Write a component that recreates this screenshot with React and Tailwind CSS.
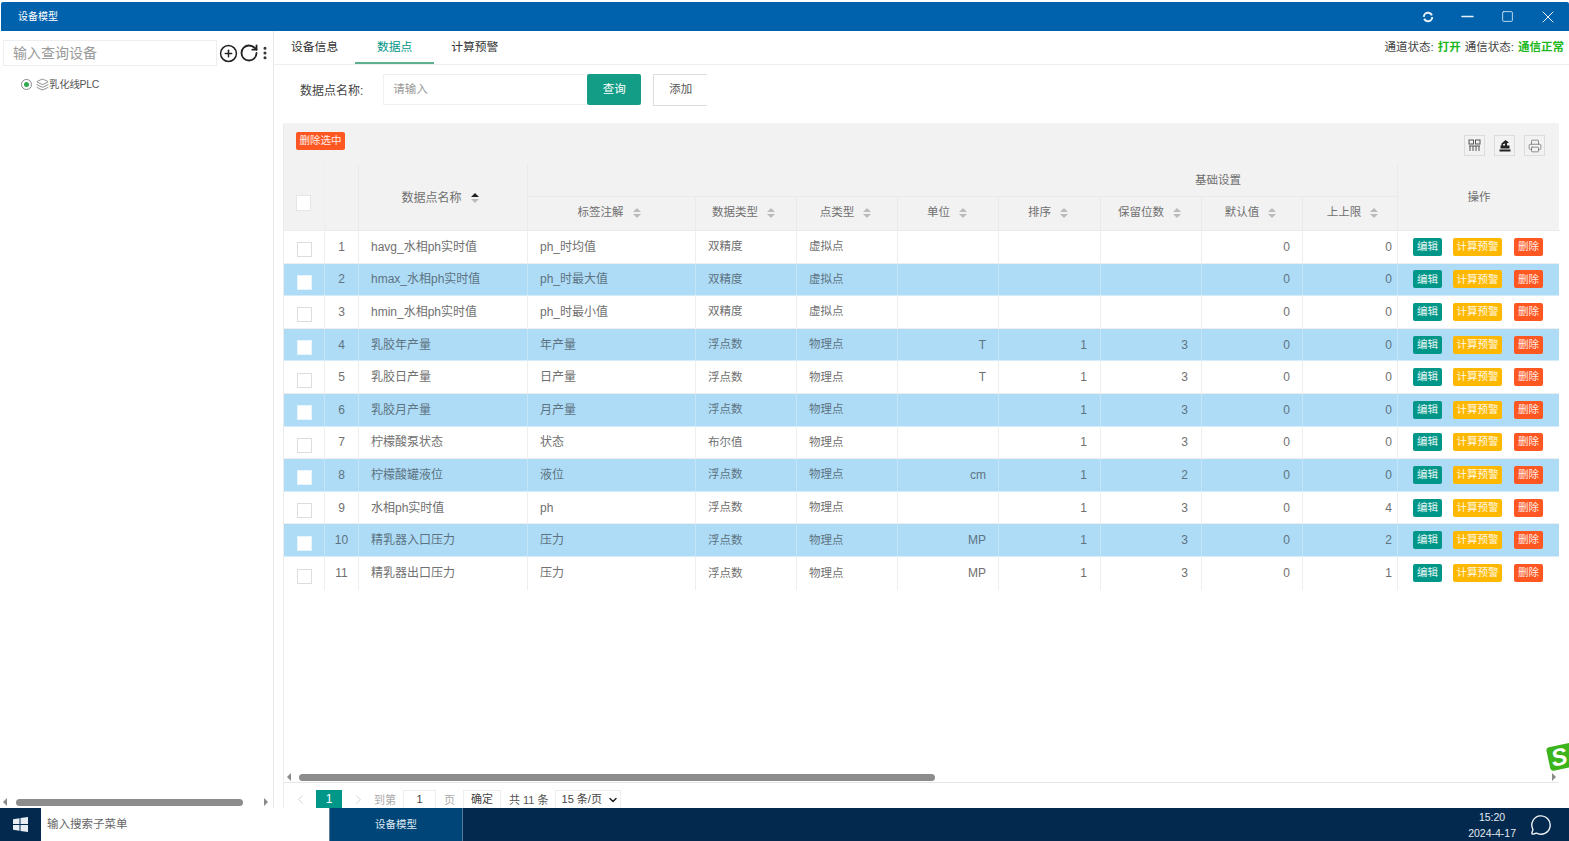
import { Minus, Square, X, CirclePlus, RotateCw, EllipsisVertical, Layers, Printer, MessageCircle, ChevronLeft, ChevronRight, ChevronDown } from "lucide-react";

const gridCols = "grid grid-cols-[41px_34px_169px_168px_101px_101px_101px_102px_101px_101px_95px_162px]";

const rows = [
  ["havg_水相ph实时值", "ph_时均值", "双精度", "虚拟点", "", "", "", "0", "0"],
  ["hmax_水相ph实时值", "ph_时最大值", "双精度", "虚拟点", "", "", "", "0", "0"],
  ["hmin_水相ph实时值", "ph_时最小值", "双精度", "虚拟点", "", "", "", "0", "0"],
  ["乳胶年产量", "年产量", "浮点数", "物理点", "T", "1", "3", "0", "0"],
  ["乳胶日产量", "日产量", "浮点数", "物理点", "T", "1", "3", "0", "0"],
  ["乳胶月产量", "月产量", "浮点数", "物理点", "", "1", "3", "0", "0"],
  ["柠檬酸泵状态", "状态", "布尔值", "物理点", "", "1", "3", "0", "0"],
  ["柠檬酸罐液位", "液位", "浮点数", "物理点", "cm", "1", "2", "0", "0"],
  ["水相ph实时值", "ph", "浮点数", "物理点", "", "1", "3", "0", "4"],
  ["精乳器入口压力", "压力", "浮点数", "物理点", "MP", "1", "3", "0", "2"],
  ["精乳器出口压力", "压力", "浮点数", "物理点", "MP", "1", "3", "0", "1"],
];

const subHeaders = [
  ["标签注解", "pr-[5px]"],
  ["数据类型", "pr-[5px]"],
  ["点类型", "pr-[3px]"],
  ["单位", "pr-[2px]"],
  ["排序", "pr-[3px]"],
  ["保留位数", "pr-[3px]"],
  ["默认值", "pr-[3px]"],
  ["上上限", "pl-[5px]"],
];

function SortIcon({ active }) {
  return (
    <span className="ml-[9px] flex flex-col gap-[2px]">
      <span className={`h-0 w-0 border-x-[4px] border-b-[4px] border-x-transparent ${active ? "border-b-[#222]" : "border-b-[#bbb]"}`} />
      <span className="h-0 w-0 border-x-[4px] border-t-[4px] border-x-transparent border-t-[#bbb]" />
    </span>
  );
}

function TinyBtn({ className, children }) {
  return (
    <span className={`flex h-[18px] items-center justify-center rounded-[2px] text-[10.5px] text-white/90 ${className}`}>
      {children}
    </span>
  );
}

function ToolBtn({ children }) {
  return (
    <span className="flex h-[21px] w-[21px] items-center justify-center border border-[#dcdcdc] text-[#555]">
      {children}
    </span>
  );
}

function Row({ row, index, last }) {
  const blue = index % 2 === 1;
  const cell = `flex items-center border-r ${blue ? "border-[#c4e4f7]" : "border-[#eeeeee]"}`;
  const edge = last ? "" : "border-b";
  return (
    <div className={`${gridCols} h-[32.6px] text-[11.5px] ${edge} ${blue ? "border-b-[#d5ecf9] bg-[#aedcf6] text-[#5d7382]" : "border-b-[#eeeeee] bg-white text-[#707070]"}`}>
      <div className={`${cell} pl-[13px] pt-[6px]`}>
        <span className={`h-[15px] w-[15px] border ${blue ? "border-[#e8f4fb] bg-white" : "border-[#dddddd] bg-white"}`} />
      </div>
      <div className={`${cell} justify-center text-[12px]`}>{index + 1}</div>
      <div className={`${cell} pl-[12px] text-[12px]`}>{row[0]}</div>
      <div className={`${cell} pl-[12px] text-[12px]`}>{row[1]}</div>
      <div className={`${cell} pl-[12px]`}>{row[2]}</div>
      <div className={`${cell} pl-[12px]`}>{row[3]}</div>
      <div className={`${cell} justify-end pr-[12px] text-[12px]`}>{row[4]}</div>
      <div className={`${cell} justify-end pr-[13px] text-[12px]`}>{row[5]}</div>
      <div className={`${cell} justify-end pr-[13px] text-[12px]`}>{row[6]}</div>
      <div className={`${cell} justify-end pr-[12px] text-[12px]`}>{row[7]}</div>
      <div className={`${cell} justify-end pr-[5px] text-[12px]`}>{row[8]}</div>
      <div className="flex items-center pl-[15px]">
        <TinyBtn className="w-[29px] bg-[#009688]">编辑</TinyBtn>
        <TinyBtn className="ml-[11px] w-[49px] bg-[#ffb800]">计算预警</TinyBtn>
        <TinyBtn className="ml-[12px] w-[29px] bg-[#ff5722]">删除</TinyBtn>
      </div>
    </div>
  );
}

function Scrollbar({ thumbClass, rightClass }) {
  return (
    <div className="flex items-center">
      <span className="ml-[3px] h-0 w-0 border-y-[4px] border-r-[4px] border-y-transparent border-r-[#8a8a8a]" />
      <span className={`h-[7px] rounded-full bg-[#8c8c8c] ${thumbClass}`} />
      <span className={`h-0 w-0 border-y-[4px] border-l-[4px] border-y-transparent border-l-[#8a8a8a] ${rightClass}`} />
    </div>
  );
}

function TitleBar() {
  return (
    <div className="ml-[1px] flex h-[29px] shrink-0 items-center rounded-t-[2px] bg-[#0062ad] pl-[17px] text-white">
      <span className="text-[10px]">设备模型</span>
      <div className="ml-auto flex items-center text-[#e8f1f8]">
        <svg width="12" height="12" viewBox="0 0 12 12" fill="none" stroke="currentColor" strokeWidth="2">
          <circle cx="6" cy="6" r="4.2" strokeDasharray="11 2" />
        </svg>
        <Minus size={19} strokeWidth={1.8} className="ml-[24px]" />
        <Square size={13} strokeWidth={1.5} className="ml-[24px]" />
        <X size={20} strokeWidth={1.2} className="ml-[24px] mr-[11px]" />
      </div>
    </div>
  );
}

function Sidebar() {
  return (
    <aside className="flex w-[274px] shrink-0 flex-col border-r border-[#e8e8e8]">
      <div className="mt-[9px] flex items-center">
        <div className="ml-[3px] flex h-[26px] w-[214px] shrink-0 items-center border border-[#eeeeee] pl-[9px] text-[14px] text-[#9a9a9a]">输入查询设备</div>
        <CirclePlus size={19} strokeWidth={1.9} className="ml-[2px] shrink-0 text-[#222]" />
        <RotateCw size={20} strokeWidth={2.2} className="ml-[1px] shrink-0 text-[#222]" />
        <EllipsisVertical size={16} strokeWidth={2.6} className="ml-[-2px] shrink-0 text-[#333]" />
      </div>
      <div className="mt-[11px] flex items-center pl-[21px] text-[10.5px] text-[#555]">
        <span className="flex h-[11px] w-[11px] items-center justify-center rounded-full border border-[#888]">
          <span className="h-[5px] w-[5px] rounded-full bg-[#2fa84f]" />
        </span>
        <Layers size={13} strokeWidth={1.2} className="ml-[4px]" />
        <span className="tracking-[-0.3px]">乳化线PLC</span>
      </div>
      <div className="mt-auto pb-[2px]">
        <Scrollbar thumbClass="ml-[9px] w-[227px]" rightClass="ml-[21px]" />
      </div>
    </aside>
  );
}

function TableHeader() {
  const h = "flex items-center border-r border-b border-[#eaeaea]";
  return (
    <div className={`${gridCols} grid-rows-[33px_34px] text-[11.5px] text-[#707070]`}>
      <div className="row-span-2 flex items-center border-r border-b border-[#eeeeee] pl-[12px] pt-[11px]">
        <span className="h-[16px] w-[15px] border border-[#e6e6e6] bg-white" />
      </div>
      <div className="row-span-2 border-r border-b border-[#eaeaea]" />
      <div className={`${h} row-span-2 justify-center pr-[6px] pt-[1px] text-[12px]`}>
        数据点名称
        <SortIcon active />
      </div>
      <div className={`${h} col-span-8 justify-end pr-[156px] pt-[2px]`}>基础设置</div>
      <div className={`${h} row-span-2 justify-center border-r-0 pt-[2px]`}>操作</div>
      {subHeaders.map(([label, shift]) => (
        <div key={label} className={`${h} justify-center pb-[2px] ${shift}`}>
          {label}
          <SortIcon />
        </div>
      ))}
    </div>
  );
}

function Pagination() {
  return (
    <div className="mt-[1px] flex h-[26px] items-start border-t border-[#e6e6e6] pt-[7px] text-[11px] text-[#777]">
      <ChevronLeft size={15} strokeWidth={1} className="ml-[9px] mt-[2px] text-[#bbb]" />
      <span className="ml-[8px] flex h-[18px] w-[26px] items-center justify-center bg-[#009688] text-[12px] text-white">1</span>
      <ChevronRight size={15} strokeWidth={1} className="ml-[9px] mt-[2px] text-[#bbb]" />
      <span className="ml-[8px] mt-[2px] text-[#aaa]">到第</span>
      <span className="ml-[7px] flex h-[19px] w-[33px] items-center justify-center border border-[#eeeeee] text-[#444]">1</span>
      <span className="ml-[8px] mt-[2px] text-[#aaa]">页</span>
      <span className="ml-[8px] flex h-[19px] w-[38px] items-center justify-center border border-[#eeeeee] text-[#444]">确定</span>
      <span className="ml-[8px] mt-[2px] text-[#555]">共 11 条</span>
      <span className="ml-[6px] flex h-[19px] w-[66px] items-center border border-[#eeeeee] pl-[6px] text-[#444]">
        15 条/页
        <ChevronDown size={12} strokeWidth={3} className="ml-auto mr-[1px] text-[#222]" />
      </span>
    </div>
  );
}

function DataPanel() {
  return (
    <main className="flex min-w-0 flex-1 flex-col">
      <div className="flex h-[34px] shrink-0 border-b border-[#eeeeee] text-[11.8px] text-[#333]">
        <div className="ml-[17px] flex items-center pt-[1px]">设备信息</div>
        <div className="ml-[17px] flex w-[79px] items-center justify-center border-b-2 border-[#5fb08e] pt-[2px] text-[#009688]">数据点</div>
        <div className="ml-[17px] flex items-center pt-[1px]">计算预警</div>
        <div className="ml-auto flex items-center pr-[5px] pt-[1px] text-[11.5px] text-[#444]">
          通道状态:
          <b className="mx-[4px] text-[#1db81d]">打开</b>
          通信状态:
          <b className="ml-[4px] text-[#1db81d]">通信正常</b>
        </div>
      </div>

      <div className="flex h-[58px] shrink-0 items-start pt-[9px] text-[11.5px]">
        <span className="ml-[26px] mt-[8px] text-[12px] text-[#444]">数据点名称:</span>
        <div className="ml-[20px] flex h-[31px] w-[204px] items-center border-y border-l border-[#f0f0f0] pl-[9px] text-[#999]">请输入</div>
        <button className="flex h-[31px] w-[54px] items-center justify-center rounded-[2px] bg-[#149d86] text-white">查询</button>
        <button className="ml-[12px] flex h-[32px] w-[54px] items-center justify-center border-y border-l border-[#dddddd] text-[#555]">添加</button>
      </div>

      <div className="ml-[9px] mr-[10px] flex min-h-0 flex-1 flex-col border-l border-[#ececec]">
        <div className="rounded-t-[2px] bg-[#f2f2f2]">
          <div className="flex h-[41px] items-start pl-[12px] pr-[14px] pt-[9px]">
            <span className="flex h-[18px] w-[49px] items-center justify-center rounded-[2px] bg-[#ff5722] text-[10.5px] text-white/90">删除选中</span>
            <div className="ml-auto mt-[3px] flex gap-[9px]">
              <ToolBtn>
                <svg width="13" height="13" viewBox="0 0 13 13" fill="none" stroke="currentColor" strokeWidth="1">
                  <rect x="1" y="1" width="4.5" height="4" />
                  <rect x="7.5" y="1" width="4.5" height="4" />
                  <path d="M1 7h11M2 7v5M5 7v5M8 7v5M11 7v5" />
                </svg>
              </ToolBtn>
              <ToolBtn>
                <svg width="14" height="14" viewBox="0 0 14 14" fill="#222">
                  <path d="M7.500 1 11 3.500 9 4.200V6.500H7V4.500L5 5.300V6.500H11.500V9.500H2.500V6.500H3.500V4.500Z" />
                  <path d="M1.500 10.500H12.500V12.500H1.500Z" />
                </svg>
              </ToolBtn>
              <ToolBtn>
                <Printer size={14} strokeWidth={1.4} className="text-[#777]" />
              </ToolBtn>
            </div>
          </div>
          <TableHeader />
        </div>
        {rows.map((row, i) => (
          <Row key={row[0]} row={row} index={i} last={i === rows.length - 1} />
        ))}
        <div className="mt-auto">
          <Scrollbar thumbClass="ml-[8px] w-[636px]" rightClass="ml-[617px]" />
        </div>
        <Pagination />
      </div>
    </main>
  );
}

function Taskbar() {
  return (
    <div className="flex h-[33px] shrink-0 items-center bg-[#03294f] text-white">
      <div className="flex h-full w-[41px] items-center justify-center">
        <svg width="15" height="15" viewBox="0 0 15 15" fill="#e8eef4">
          <path d="M0 2.200 6.500 1.200V7H0ZM7.500 1 15 0V7H7.500ZM0 8H6.500V13.800L0 12.800ZM7.500 8H15V15L7.500 14Z" />
        </svg>
      </div>
      <div className="flex h-full w-[288px] items-center bg-white pl-[6px] text-[11.5px] text-[#666]">输入搜索子菜单</div>
      <div className="flex h-full w-[134px] items-center justify-center border-x border-[#5a7c9b] bg-[#004578] text-[10.5px] text-[#dfeaf3]">设备模型</div>
      <div className="ml-auto flex flex-col items-center text-[10.5px] leading-[16px] text-[#e4ebf1]">
        <span>15:20</span>
        <span>2024-4-17</span>
      </div>
      <MessageCircle size={22} strokeWidth={1.5} className="ml-[14px] mr-[17px] text-[#f2f5f8]" />
    </div>
  );
}

export default function App() {
  return (
    <div className="relative flex h-[841px] w-[1569px] flex-col overflow-hidden bg-white pt-[2px] font-['Liberation_Sans','Noto_Sans_CJK_SC',sans-serif]">
      <TitleBar />
      <div className="flex min-h-0 flex-1">
        <Sidebar />
        <DataPanel />
      </div>
      <Taskbar />
      {/* 输入法悬浮图标 */}
      <div className="absolute left-[1548px] top-[744px] flex h-[24px] w-[34px] -rotate-12 items-center rounded-[3px] bg-[#3cb41c] pl-[3px] text-[24px] font-bold italic leading-none text-white">
        S
      </div>
    </div>
  );
}
